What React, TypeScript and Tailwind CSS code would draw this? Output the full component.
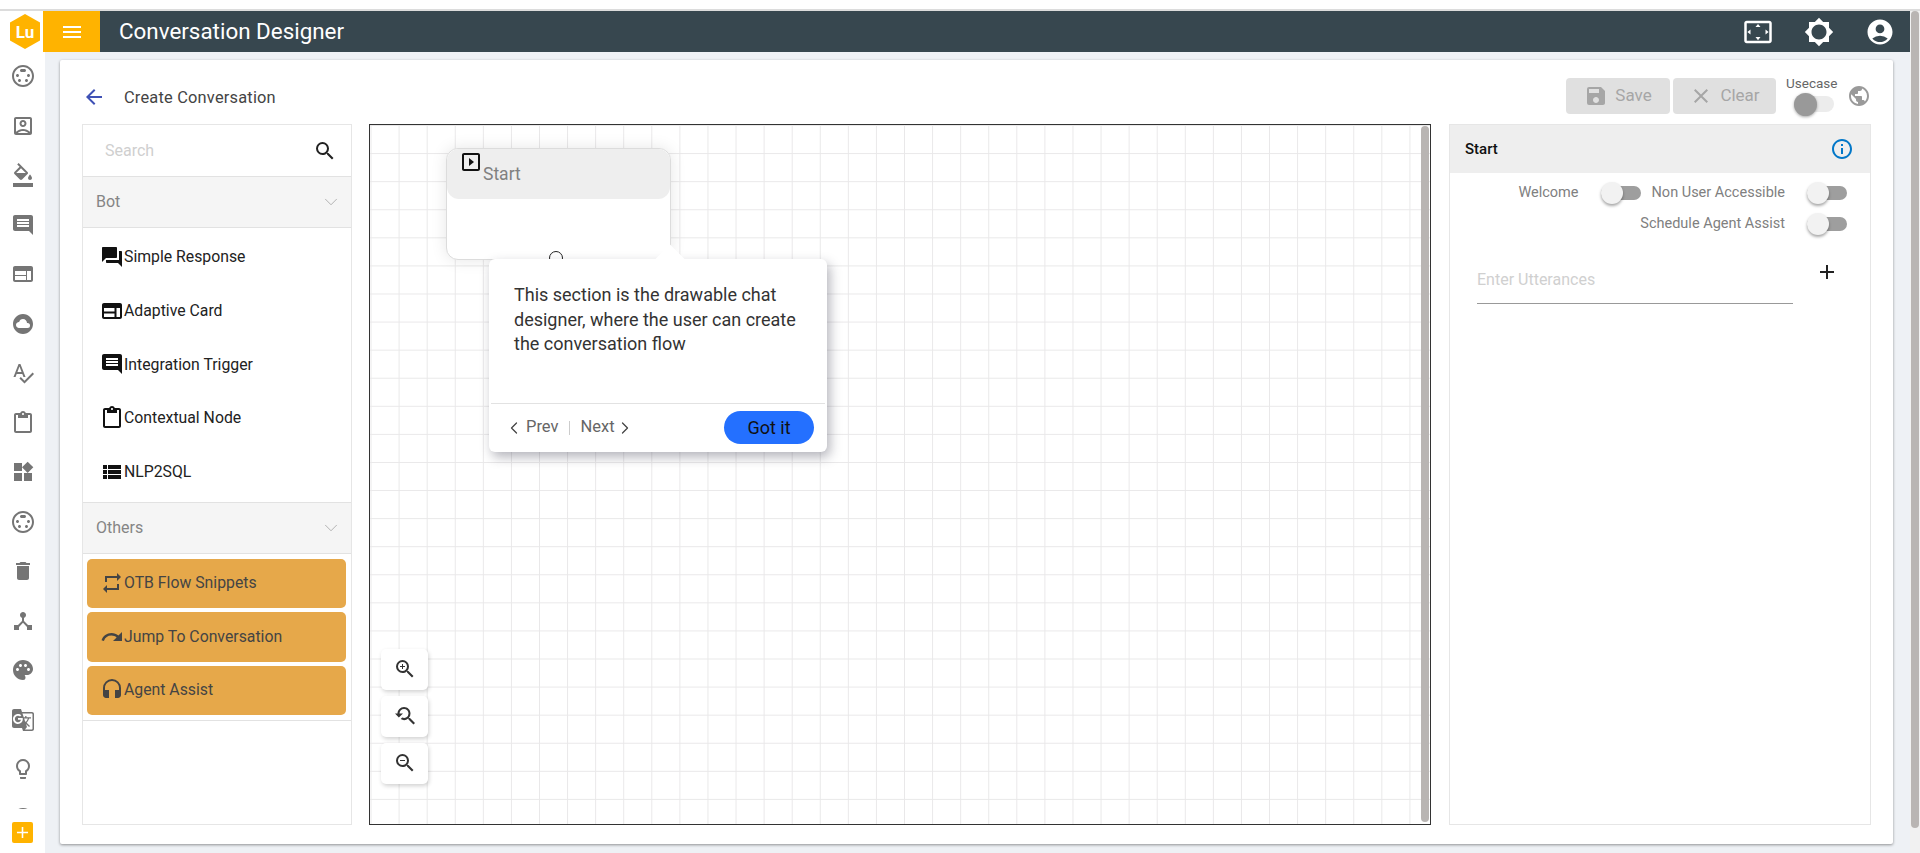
import { ChevronDown, ChevronLeft, ChevronRight } from "lucide-react";
import type { ReactNode } from "react";
import {
  MdAccountCircle,
  MdAdd,
  MdArrowBack,
  MdBrightness5,
  MdClose,
  MdCloudCircle,
  MdDelete,
  MdDeviceHub,
  MdFormatColorFill,
  MdGTranslate,
  MdHeadset,
  MdInfoOutline,
  MdInsertComment,
  MdLightbulbOutline,
  MdMenu,
  MdOutlineAccountBox,
  MdOutlineContentPaste,
  MdOutlineSlideshow,
  MdOutlineWeb,
  MdPalette,
  MdPublic,
  MdQuestionAnswer,
  MdRedo,
  MdRepeat,
  MdSave,
  MdSearch,
  MdSettingsInputSvideo,
  MdSettingsOverscan,
  MdSpellcheck,
  MdViewList,
  MdWeb,
  MdWidgets,
  MdYoutubeSearchedFor,
  MdZoomIn,
  MdZoomOut,
} from "react-icons/md";

const railIcons = [
  MdSettingsInputSvideo,
  MdOutlineAccountBox,
  MdFormatColorFill,
  MdInsertComment,
  MdWeb,
  MdCloudCircle,
  MdSpellcheck,
  MdOutlineContentPaste,
  MdWidgets,
  MdSettingsInputSvideo,
  MdDelete,
  MdDeviceHub,
  MdPalette,
  MdGTranslate,
  MdLightbulbOutline,
  MdSettingsInputSvideo,
];

const botItems = [
  { label: "Simple Response", icon: <MdQuestionAnswer size={24} /> },
  { label: "Adaptive Card", icon: <MdOutlineWeb size={24} /> },
  { label: "Integration Trigger", icon: <MdInsertComment size={24} /> },
  { label: "Contextual Node", icon: <MdOutlineContentPaste size={24} /> },
  { label: "NLP2SQL", icon: <MdViewList size={24} /> },
];

const otherItems = [
  { label: "OTB Flow Snippets", icon: <MdRepeat size={24} />, box: "h-[49px] pb-[2px]" },
  { label: "Jump To Conversation", icon: <MdRedo size={24} />, box: "h-[50px]" },
  { label: "Agent Assist", icon: <MdHeadset size={24} />, box: "h-[49px] pb-[2px]" },
];

function Logo() {
  return (
    <svg width="32" height="36" viewBox="0 0 32 36">
      <polygon points="16,0 31,8.5 31,26.5 16,35 1,26.5 1,8.5" fill="#ffb300" />
      <text x="16" y="24" textAnchor="middle" fill="#fff" fontSize="17" fontWeight="700" fontFamily="Roboto, sans-serif">
        Lu
      </text>
    </svg>
  );
}

function Switch() {
  return (
    <div className="relative h-[14px] w-[40px] rounded-full bg-[#9e9e9e]">
      <div className="absolute left-0 top-[-4px] h-[22px] w-[22px] rounded-full bg-[#f2f2f2] shadow-[0_2px_3px_rgba(0,0,0,0.35)]" />
    </div>
  );
}

function SectionHead({ title }: { title: string }) {
  return (
    <div className="flex h-[51px] items-center justify-between border-b border-[#e2e2e2] bg-[#f5f5f5] pl-[13px] pr-[9px] text-[16px] text-[#858585]">
      <span>{title}</span>
      <ChevronDown size={22} strokeWidth={0.8} className="text-[#999]" />
    </div>
  );
}

function ZoomBtn({ children }: { children: ReactNode }) {
  return (
    <div className="flex h-[41px] w-[47px] items-center justify-center rounded-[5px] bg-white pb-[2px] text-[#333] shadow-[1px_2px_4px_rgba(0,0,0,0.18)]">
      {children}
    </div>
  );
}

export default function App() {
  return (
    <div className="flex h-[853px] w-[1920px] flex-col overflow-hidden bg-white font-['Roboto',sans-serif]">
      <div className="mt-[9px] h-[2px] shrink-0 bg-[#dcdcdc]" />
      <div className="flex min-h-0 flex-1">
        <div className="flex min-w-0 flex-1 flex-col">
          {/* top bar */}
          <div className="flex h-[41px] shrink-0">
            <div className="flex w-[43px] items-center justify-center pl-[6px]">
              <Logo />
            </div>
            <div className="flex w-[57px] items-center justify-center bg-[#ffb300] text-white">
              <MdMenu size={24} />
            </div>
            <div className="flex flex-1 items-center bg-[#37474f] pl-[19px] pr-[15px] text-white">
              <span className="text-[22.4px] leading-none">Conversation Designer</span>
              <div className="ml-auto flex items-center gap-[31px]">
                <MdSettingsOverscan size={30} />
                <MdBrightness5 size={30} />
                <MdAccountCircle size={30} />
              </div>
            </div>
          </div>

          <div className="flex min-h-0 flex-1">
            {/* rail */}
            <div className="flex w-[45px] shrink-0 flex-col items-center bg-white">
              <div className="flex h-[757px] flex-col items-center gap-[25.5px] overflow-hidden pl-[1px] pt-[12px] text-[#757575]">
                {railIcons.map((Icon, i) => (
                  <Icon key={i} size={24} className="shrink-0" />
                ))}
              </div>
              <div className="mt-[13px] flex h-[21px] w-[21px] items-center justify-center rounded-[2px] bg-[#ffb300] text-white">
                <MdAdd size={19} />
              </div>
            </div>

            <div className="min-w-0 flex-1 bg-[#eef1f5] pb-[9px] pl-[15px] pr-[17px] pt-[8px]">
              <div className="flex h-full flex-col rounded-[2px] bg-white px-[22px] shadow-[0_1px_3px_rgba(0,0,0,0.4)]">
                {/* page title and actions */}
                <div className="flex h-[64px] shrink-0 items-start">
                  <MdArrowBack size={24} className="mt-[25px] text-[#3f51b5]" />
                  <span className="ml-[18px] mt-[28px] text-[16.4px] leading-[20px] tracking-[0.2px] text-[#444]">
                    Create Conversation
                  </span>
                  <div className="ml-auto mt-[18px] flex items-start">
                    <div className="flex h-[36px] w-[104px] items-center justify-center gap-[7px] rounded-[4px] bg-[#e0e0e0] text-[17px] text-[#a6a6a6]">
                      <MdSave size={24} />
                      Save
                    </div>
                    <div className="ml-[3px] flex h-[36px] w-[103px] items-center justify-center gap-[7px] rounded-[4px] bg-[#e0e0e0] text-[17px] text-[#a6a6a6]">
                      <MdClose size={24} />
                      Clear
                    </div>
                    <div className="ml-[10px] flex w-[52px] flex-col">
                      <span className="text-[13.5px] leading-[10px] text-[#666]">Usecase</span>
                      <div className="relative ml-[8px] mt-[8px] h-[16px] w-[40px] rounded-full bg-[#ececec]">
                        <div className="absolute left-0 top-[-3px] h-[23px] w-[23px] rounded-full bg-[#999] shadow-[0_1px_3px_rgba(0,0,0,0.35)]" />
                      </div>
                    </div>
                    <MdPublic size={24} className="ml-[9px] mt-[6px] text-[#9a9a9a]" />
                  </div>
                </div>

                <div className="flex h-[701px] shrink-0 gap-[17px]">
                  {/* palette */}
                  <div className="flex w-[270px] shrink-0 flex-col border border-[#e6e6e6]">
                    <div className="flex h-[52px] shrink-0 items-center justify-between border-b border-[#e2e2e2] pl-[22px] pr-[14px]">
                      <span className="text-[16px] text-[#cfcfcf]">Search</span>
                      <MdSearch size={24} className="text-[#222]" />
                    </div>
                    <SectionHead title="Bot" />
                    <div className="flex h-[275px] shrink-0 flex-col border-b border-[#e2e2e2] pl-[17px] pt-[2px]">
                      {botItems.map((item) => (
                        <div key={item.label} className="flex h-[53.8px] items-center text-[15.8px] text-[#222]">
                          <span className="flex w-[24px] justify-center text-[#111]">{item.icon}</span>
                          {item.label}
                        </div>
                      ))}
                    </div>
                    <SectionHead title="Others" />
                    <div className="flex flex-col gap-[4px] border-b border-[#e2e2e2] pb-[5px] pl-[4px] pr-[5px] pt-[5px]">
                      {otherItems.map((item) => (
                        <div
                          key={item.label}
                          className={`flex ${item.box} items-center rounded-[5px] bg-[#e6a84a] pl-[13px] text-[15.8px] text-[#444]`}
                        >
                          <span className="flex w-[24px] justify-center">{item.icon}</span>
                          {item.label}
                        </div>
                      ))}
                    </div>
                  </div>

                  {/* canvas */}
                  <div className="relative w-[1062px] shrink-0 overflow-hidden border border-[#333] bg-white bg-[linear-gradient(to_right,transparent_26.9px,#e9e8e9_26.9px),linear-gradient(to_bottom,transparent_26.9px,#e9e8e9_26.9px)] bg-[length:28.08px_28.08px] bg-[position:1.5px_1px]">
                    <div className="absolute right-[1px] top-[1px] bottom-[2px] w-[8px] rounded-full bg-[#b9b5b3]" />

                    {/* start node */}
                    <div className="absolute left-[76px] top-[23px] h-[112px] w-[225px] rounded-[12px] border border-[#dcdcdc] bg-white shadow-[0_0_16px_rgba(0,0,0,0.1)]">
                      <div className="relative h-[50px] rounded-[12px] bg-[#eeeeee]">
                        <MdOutlineSlideshow size={24} className="absolute left-[12px] top-[1px] text-[#111]" />
                        <span className="absolute left-[36px] top-[13px] text-[17.5px] leading-[24px] text-[#808080]">Start</span>
                      </div>
                      <div className="absolute left-[102px] top-[102px] h-[14px] w-[14px] rounded-full border border-[#222] bg-white" />
                    </div>

                    {/* tour popover */}
                    <div className="absolute left-[119px] top-[134px] h-[193px] w-[338px] rounded-[6px] bg-white shadow-[3px_5px_12px_rgba(40,40,60,0.35)]">
                      <div className="absolute left-[170px] top-[-10px] h-[22px] w-[22px] rotate-45 bg-white" />
                      <p className="relative px-[25px] pt-[24px] text-[18px] leading-[24.6px] text-[#333]">
                        This section is the drawable chat designer, where the user can create the conversation flow
                      </p>
                      <div className="absolute bottom-0 left-[2px] right-[2px] flex h-[49px] items-center border-t border-[#e2e2e2] pb-[1px] pl-[13px] pr-[11px] text-[16.5px] text-[#666]">
                        <ChevronLeft size={20} strokeWidth={1.5} className="text-[#444]" />
                        <span className="ml-[2px]">Prev</span>
                        <span className="ml-[11px] mr-[10px] h-[14px] w-[1px] bg-[#cccccc]" />
                        <span>Next</span>
                        <ChevronRight size={20} strokeWidth={1.5} className="text-[#444]" />
                        <div className="ml-auto flex h-[33px] w-[90px] items-center justify-center rounded-full bg-[#2470ff] text-[18px] text-[#111]">
                          Got it
                        </div>
                      </div>
                    </div>

                    {/* zoom controls */}
                    <div className="absolute bottom-[40px] left-[11px] flex flex-col gap-[6px]">
                      <ZoomBtn>
                        <MdZoomIn size={24} />
                      </ZoomBtn>
                      <ZoomBtn>
                        <MdYoutubeSearchedFor size={24} />
                      </ZoomBtn>
                      <ZoomBtn>
                        <MdZoomOut size={24} />
                      </ZoomBtn>
                    </div>
                  </div>

                  {/* properties */}
                  <div className="ml-[1px] flex flex-1 flex-col border border-[#e6e6e6]">
                    <div className="flex h-[48px] shrink-0 items-center justify-between bg-[#eeeeee] pl-[15px] pr-[16px]">
                      <span className="text-[15px] font-medium text-[#111]">Start</span>
                      <MdInfoOutline size={24} className="text-[#0277c8]" />
                    </div>
                    <div className="flex flex-col pr-[23px] pt-[4px] text-[14.5px] text-[#808080]">
                      <div className="flex h-[31px] items-center justify-end">
                        <span>Welcome</span>
                        <span className="ml-[22px]">
                          <Switch />
                        </span>
                        <span className="ml-[11px]">Non User Accessible</span>
                        <span className="ml-[22px]">
                          <Switch />
                        </span>
                      </div>
                      <div className="flex h-[31px] items-center justify-end">
                        <span>Schedule Agent Assist</span>
                        <span className="ml-[22px]">
                          <Switch />
                        </span>
                      </div>
                    </div>
                    <div className="mt-[14px] flex items-start pl-[27px]">
                      <div className="flex h-[51px] w-[316px] items-center border-b border-[#999] pt-[3px] text-[16px] text-[#d0d0d0]">
                        Enter Utterances
                      </div>
                      <MdAdd size={24} className="ml-[22px] mt-[7px] text-[#222]" />
                    </div>
                  </div>
                </div>
              </div>
            </div>
          </div>
        </div>

        {/* page scrollbar */}
        <div className="w-[10px] shrink-0 bg-[#f1f1f1] pl-[1px] pr-[1px]">
          <div className="h-[817px] rounded-full bg-[#b9b5b3]" />
        </div>
      </div>
    </div>
  );
}
